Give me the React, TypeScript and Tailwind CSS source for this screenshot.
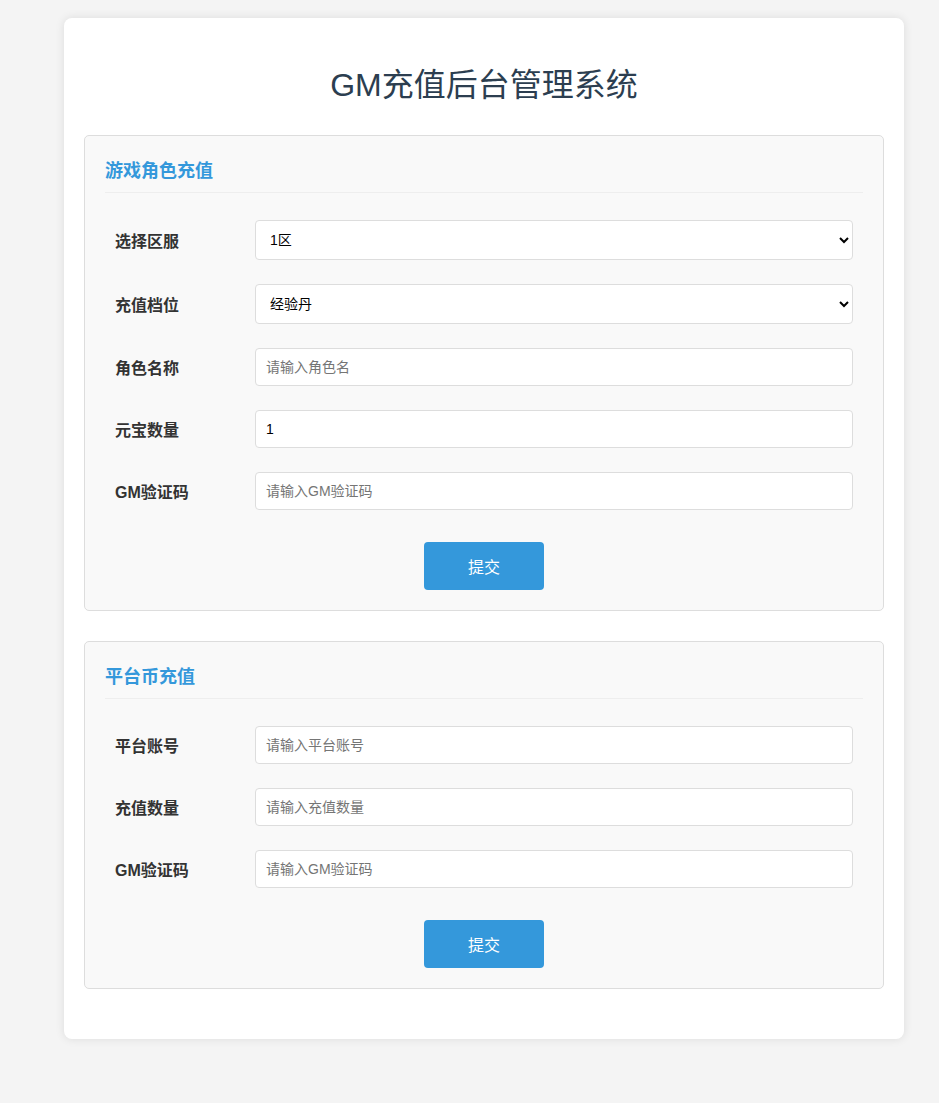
import React from "react";

const font = { fontFamily: '"Liberation Sans", "Noto Sans CJK SC", sans-serif' };

function Row({ label, children }: { label: string; children: React.ReactNode }) {
  return (
    <div className="flex items-center px-[10px] mb-[24px] last:mb-0">
      <label className="w-[140px] shrink-0 pt-[4px] text-[16px] font-bold text-[#333]">{label}</label>
      <div className="flex-1">{children}</div>
    </div>
  );
}

function TextInput({ placeholder, value }: { placeholder?: string; value?: string }) {
  return (
    <input
      type="text"
      placeholder={placeholder}
      defaultValue={value}
      className="block w-full h-[38px] px-[10px] bg-white border border-[#ddd] rounded-[4px] text-[14px] text-black placeholder:text-[#757575] outline-none"
    />
  );
}

function Select({ options }: { options: string[] }) {
  return (
    <select className="block w-full h-[40px] pl-[10px] pr-[6px] bg-white border border-[#ddd] rounded-[4px] text-[14px] text-black outline-none">
      {options.map((o) => (
        <option key={o}>{o}</option>
      ))}
    </select>
  );
}

function Section({ title, children }: { title: string; children: React.ReactNode }) {
  return (
    <div className="bg-[#f9f9f9] border border-[#ddd] rounded-[5px] p-[20px] mb-[30px]">
      <h3 className="text-[18px] leading-[28px] font-bold text-[#3498db] pt-[1px] pb-[7px] border-b border-[#eee] mb-[27px]">
        {title}
      </h3>
      <div>{children}</div>
      <div className="flex justify-center mt-[32px]">
        <button className="w-[120px] h-[48px] pt-[3px] bg-[#3498db] text-white text-[16px] rounded-[4px]">提交</button>
      </div>
    </div>
  );
}

export default function App() {
  return (
    <div className="min-h-screen bg-[#f4f4f4] pl-[64px] pt-[18px] pb-[65px]" style={font}>
      <div className="w-[840px] bg-white rounded-[8px] shadow-[0_0_10px_rgba(0,0,0,0.1)] p-[20px]">
        <h1 className="text-center text-[32px] leading-[40px] font-normal text-[#2c3e50] mt-[27px] mb-[30px]">
          GM充值后台管理系统
        </h1>
        <Section title="游戏角色充值">
          <Row label="选择区服">
            <Select options={["1区", "2区", "3区"]} />
          </Row>
          <Row label="充值档位">
            <Select options={["经验丹", "元宝", "礼包"]} />
          </Row>
          <Row label="角色名称">
            <TextInput placeholder="请输入角色名" />
          </Row>
          <Row label="元宝数量">
            <TextInput value="1" />
          </Row>
          <Row label="GM验证码">
            <TextInput placeholder="请输入GM验证码" />
          </Row>
        </Section>
        <Section title="平台币充值">
          <Row label="平台账号">
            <TextInput placeholder="请输入平台账号" />
          </Row>
          <Row label="充值数量">
            <TextInput placeholder="请输入充值数量" />
          </Row>
          <Row label="GM验证码">
            <TextInput placeholder="请输入GM验证码" />
          </Row>
        </Section>
      </div>
    </div>
  );
}
